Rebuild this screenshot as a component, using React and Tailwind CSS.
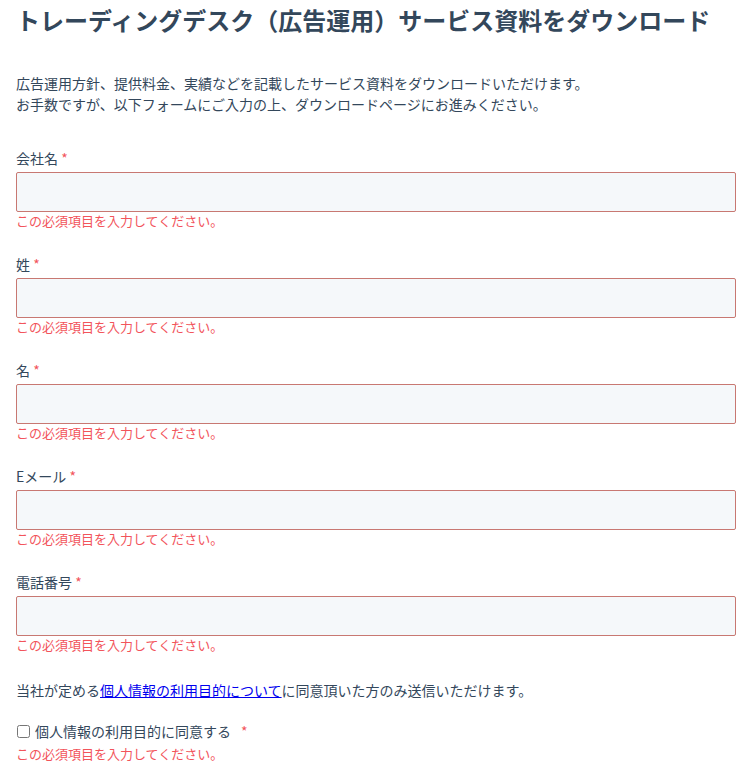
import React from 'react';

const fields = ['会社名', '姓', '名', 'Eメール', '電話番号'];

function ErrorText({ className = '' }) {
  return (
    <p className={`text-[13px] leading-[18px] text-[#f2545b] ${className}`}>この必須項目を入力してください。</p>
  );
}

export default function App() {
  return (
    <div
      className="min-h-screen bg-white pl-4 pr-[18px] pt-[5px] text-[#33475b]"
      style={{ fontFamily: '"Noto Sans CJK JP", "Noto Sans", sans-serif' }}
    >
      <h1 className="text-[24px] font-bold leading-[29px]">
        トレーディングデスク（広告運用）サービス資料をダウンロード
      </h1>

      <div className="mt-[39px] text-[14px] leading-[21px]">
        <p>広告運用方針、提供料金、実績などを記載したサービス資料をダウンロードいただけます。</p>
        <p>お手数ですが、以下フォームにご入力の上、ダウンロードページにお進みください。</p>
      </div>

      <form className="mt-[33px]">
        {fields.map((label) => (
          <div key={label} className="mb-6">
            <label className="block text-[14px] leading-[20px]">
              {label} <span className="text-[#f2545b]">*</span>
            </label>
            <input
              type="text"
              className="mt-1 block h-10 w-full rounded-[2px] border border-[#c87872] bg-[#f5f8fa] px-3 outline-none"
            />
            <ErrorText />
          </div>
        ))}

        <p className="mt-[26px] text-[14px] leading-[21px]">
          当社が定める
          <a href="#" className="text-[#0000ee] underline">個人情報の利用目的について</a>
          に同意頂いた方のみ送信いただけます。
        </p>

        <div className="mt-5">
          <label className="flex items-center text-[14px] leading-[20px]">
            <input type="checkbox" className="m-0 ml-px mr-[5px] h-[13px] w-[13px]" />
            <span>個人情報の利用目的に同意する</span>
            <span className="ml-[10px] text-[#f2545b]">*</span>
          </label>
          <ErrorText className="mt-1" />
        </div>
      </form>
    </div>
  );
}
